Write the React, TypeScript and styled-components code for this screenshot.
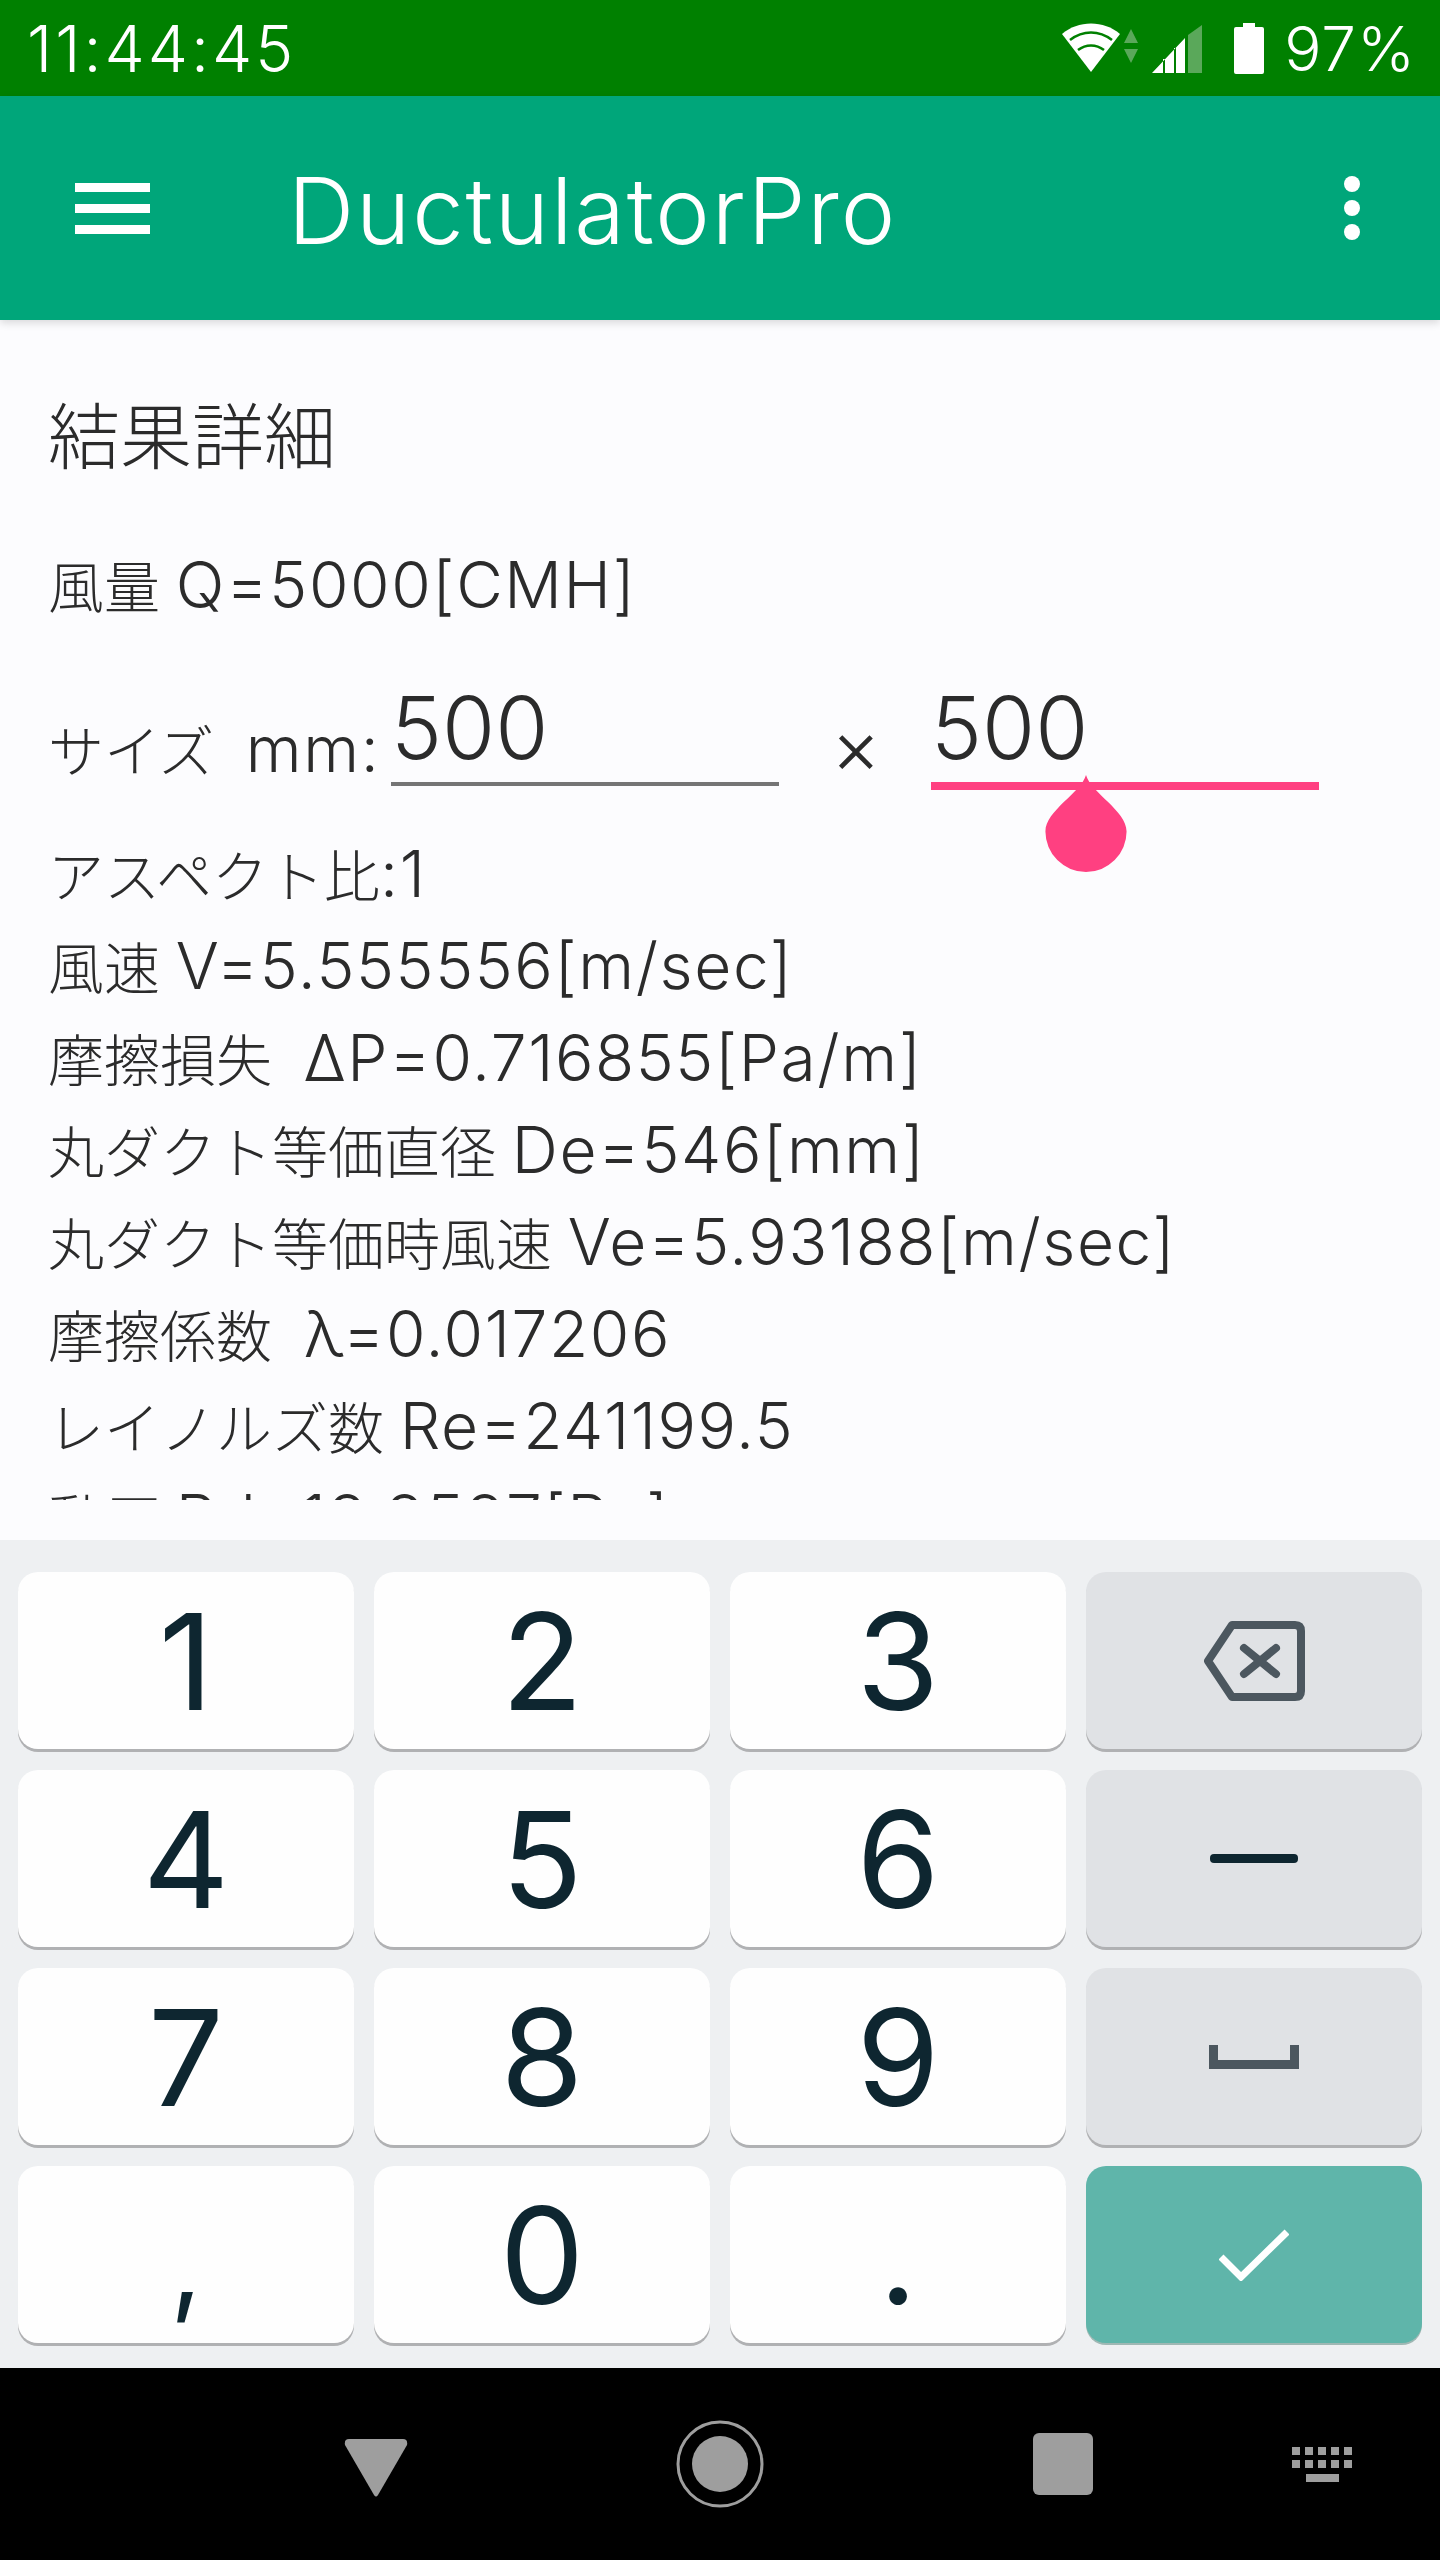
import React from 'react';
import styled, { createGlobalStyle } from 'styled-components';

const GlobalStyle = createGlobalStyle`
  html, body {
    margin: 0;
    padding: 0;
    background: #000;
  }
  * {
    box-sizing: border-box;
  }
`;

const Screen = styled.div`
  display: flex;
  flex-direction: column;
  width: 1440px;
  height: 2560px;
  overflow: hidden;
  font-family: Inter, 'Noto Sans CJK JP', sans-serif;
  background: #fcfcfe;
`;

const StatusBar = styled.div`
  flex: 0 0 96px;
  display: flex;
  align-items: center;
  justify-content: space-between;
  padding: 0 24px 0 27px;
  background: #008000;
  color: #fff;
  font-size: 62px;
  font-weight: 300;
`;

const Clock = styled.span`
  font-size: 64px;
  letter-spacing: 3px;
`;

const Percent = styled.span`
  letter-spacing: 1px;
`;

const StatusIcons = styled.div`
  display: flex;
  align-items: center;
`;

const Toolbar = styled.div`
  flex: 0 0 224px;
  display: flex;
  align-items: center;
  position: relative;
  z-index: 1;
  padding: 0 78px 0 75px;
  background: #00a67a;
  color: #fff;
  box-shadow: 0 3px 8px rgba(0, 0, 0, 0.14);
`;

const Title = styled.div`
  flex: 1;
  margin-left: 138px;
  padding-top: 6px;
  font-size: 92px;
  font-weight: 300;
  letter-spacing: 1.9px;
  line-height: 1;
`;

const Content = styled.div`
  flex: 0 0 1180px;
  padding: 67px 48px 0;
  overflow: hidden;
  color: #2b2b2b;
  font-size: 56px;
  font-weight: 300;
`;

const Gap = styled.div`
  flex: 0 0 40px;
`;

const Heading = styled.div`
  margin-bottom: 52px;
  font-size: 72px;
  line-height: 100px;
`;

const Line = styled.div`
  height: 92px;
  line-height: 92px;
  white-space: pre;
`;

const Value = styled.span`
  font-size: 64px;
  letter-spacing: 1.6px;
`;

const SizeRow = styled.div`
  display: flex;
  align-items: flex-start;
  height: 197px;
`;

const SizeLabel = styled.span`
  margin-top: 72px;
  width: 343px;
  line-height: 92px;
  white-space: pre;
`;

const Times = styled.span`
  margin: 69px 0 0 52px;
  width: 100px;
  font-size: 76px;
  line-height: 92px;
`;

const Field = styled.div<{ $focused?: boolean }>`
  position: relative;
  width: 388px;
  height: ${p => (p.$focused ? 159 : 155)}px;
  border-bottom: ${p => (p.$focused ? '8px solid #ff4081' : '4px solid #757575')};
  padding-top: 47px;
  font-size: 86px;
  line-height: 100px;
`;

const Handle = styled.svg`
  position: absolute;
  left: 114px;
  top: 144px;
`;

const Keyboard = styled.div`
  flex: 0 0 828px;
  display: grid;
  grid-template-columns: repeat(4, 336px);
  grid-template-rows: repeat(4, 177px);
  column-gap: 20px;
  row-gap: 21px;
  padding: 32px 0 0 18px;
  background: #eef0f2;
`;

const Key = styled.div<{ $kind?: 'digit' | 'function' | 'enter' | 'comma' }>`
  display: flex;
  align-items: center;
  justify-content: center;
  padding-top: ${p => (p.$kind === 'comma' ? 16 : 0)}px;
  border-radius: 20px;
  background: ${p =>
    p.$kind === 'enter' ? '#5fb5aa' : p.$kind === 'function' ? '#e0e2e5' : '#fefefe'};
  box-shadow: ${p => (p.$kind === 'enter' ? '0 2px 0 #9fb8b4' : '0 3px 0 #b0b1b3')};
  color: #0e2630;
  font-size: ${p => (p.$kind === 'comma' ? 110 : 134)}px;
  font-weight: 400;
  line-height: 1;
`;

const NavBar = styled.div`
  flex: 1;
  position: relative;
  background: #000;
`;

const NavIcon = styled.svg<{ $left: number; $top: number }>`
  position: absolute;
  left: ${p => p.$left}px;
  top: ${p => p.$top}px;
`;

const Wifi = () => (
  <svg width="60" height="50" viewBox="0 0 60 50" fill="none">
    <path d="M1 11C17-3 43-3 59 11L30 49Z" fill="#fff" />
    <path d="M9 17C22 7 38 7 51 17M17 27C25 21 35 21 43 27" stroke="#008000" strokeWidth="2.6" />
  </svg>
);

const Arrows = () => (
  <svg width="14" height="34" viewBox="0 0 14 34" style={{ margin: '0 14px 4px 3px' }}>
    <path d="M7 0L14 14H0ZM7 34L14 20H0Z" fill="#5aa85a" />
  </svg>
);

const Signal = () => (
  <svg width="50" height="48" viewBox="0 0 50 48" style={{ marginTop: 2 }}>
    <path d="M50 0V48H36V10Z" fill="#5aa85a" />
    <path d="M0 48L33 13V48ZM11 48H13V34H11ZM22 48H24V23H22Z" fill="#fff" fillRule="evenodd" />
  </svg>
);

const Battery = () => (
  <svg width="30" height="51" viewBox="0 0 30 51" style={{ margin: '0 20px 0 32px' }}>
    <path d="M9 0H21V4H28Q30 4 30 6V49Q30 51 28 51H2Q0 51 0 49V6Q0 4 2 4H9Z" fill="#fff" />
  </svg>
);

const Menu = () => (
  <svg width="75" height="51" viewBox="0 0 75 51" fill="#fff">
    <rect width="75" height="9" />
    <rect y="21" width="75" height="9" />
    <rect y="42" width="75" height="9" />
  </svg>
);

const Overflow = () => (
  <svg width="20" height="64" viewBox="0 0 20 64" fill="#fff">
    <circle cx="10" cy="8" r="8" />
    <circle cx="10" cy="32" r="8" />
    <circle cx="10" cy="56" r="8" />
  </svg>
);

const Backspace = () => (
  <svg width="102" height="80" viewBox="0 0 102 80" fill="none" stroke="#4c575f" strokeWidth="8">
    <path d="M29 4H92Q98 4 98 10V70Q98 76 92 76H29L5 40Z" strokeLinejoin="round" />
    <path d="M41 27L73 53M73 27L41 53" strokeLinecap="round" />
  </svg>
);

const Minus = () => <svg width="88" height="10"><rect width="88" height="9" rx="4" fill="#0e2630" /></svg>;

const Space = () => (
  <svg width="90" height="24" viewBox="0 0 90 24">
    <path d="M0 0H9V15H81V0H90V24H0Z" fill="#4c575f" />
  </svg>
);

const Check = () => (
  <svg width="70" height="52" viewBox="0 0 70 52" fill="none" stroke="#fff" strokeWidth="7">
    <path d="M2 28L22 48L68 3" />
  </svg>
);

const digits = ['1', '2', '3', '4', '5', '6', '7', '8', '9'];

const results = [
  ['アスペクト比', ':1'],
  ['風速 ', 'V=5.555556[m/sec]'],
  ['摩擦損失  ', 'ΔP=0.716855[Pa/m]'],
  ['丸ダクト等価直径 ', 'De=546[mm]'],
  ['丸ダクト等価時風速 ', 'Ve=5.93188[m/sec]'],
  ['摩擦係数  ', 'λ=0.017206'],
  ['レイノルズ数 ', 'Re=241199.5'],
  ['動圧 ', 'Pd=18.8587[Pa]'],
];

export default function App() {
  const fnKeys = [<Backspace key="b" />, <Minus key="m" />, <Space key="s" />];

  return (
    <>
      <GlobalStyle />
      <Screen>
        <StatusBar>
          <Clock>11:44:45</Clock>
          <StatusIcons>
            <Wifi />
            <Arrows />
            <Signal />
            <Battery />
            <Percent>97%</Percent>
          </StatusIcons>
        </StatusBar>

        <Toolbar>
          <Menu />
          <Title>DuctulatorPro</Title>
          <Overflow />
        </Toolbar>

        <Content>
          <Heading>結果詳細</Heading>
          <Line>風量 <Value>Q=5000[CMH]</Value></Line>
          <SizeRow>
            <SizeLabel>サイズ  <Value>mm:</Value></SizeLabel>
            <Field>500</Field>
            <Times>×</Times>
            <Field $focused>
              500
              <Handle width="82" height="97" viewBox="0 0 82 98">
                <path d="M41 0C46 18 82 36 82 57A41 41 0 0 1 0 57C0 36 36 18 41 0Z" fill="#ff4081" />
              </Handle>
            </Field>
          </SizeRow>
          {results.map(([label, value]) => (
            <Line key={value}>{label}<Value>{value}</Value></Line>
          ))}
        </Content>
        <Gap />

        <Keyboard>
          {digits.map((digit, i) => (
            <React.Fragment key={digit}>
              <Key>{digit}</Key>
              {i % 3 === 2 && <Key $kind="function">{fnKeys[(i - 2) / 3]}</Key>}
            </React.Fragment>
          ))}
          <Key $kind="comma">,</Key>
          <Key>0</Key>
          <Key>.</Key>
          <Key $kind="enter"><Check /></Key>
        </Keyboard>

        <NavBar>
          <NavIcon $left={344} $top={71} width="64" height="58" viewBox="0 0 64 58">
            <path d="M5 0H59Q64 0 63 6L34 56Q32 59 30 56L1 6Q0 0 5 0Z" fill="#9e9e9e" />
          </NavIcon>
          <NavIcon $left={676} $top={52} width="88" height="88" viewBox="0 0 88 88">
            <circle cx="44" cy="44" r="42" fill="none" stroke="#9e9e9e" strokeWidth="3" />
            <circle cx="44" cy="44" r="28" fill="#9e9e9e" />
          </NavIcon>
          <NavIcon $left={1033} $top={65} width="60" height="62" viewBox="0 0 60 62">
            <rect width="60" height="62" rx="6" fill="#9e9e9e" />
          </NavIcon>
          <NavIcon $left={1292} $top={79} width="61" height="36" viewBox="0 0 61 36" fill="#9e9e9e">
            {[0, 13, 26, 39, 52].map(x => (
              <React.Fragment key={x}>
                <rect x={x} width="8" height="8" />
                <rect x={x} y="13" width="8" height="8" />
              </React.Fragment>
            ))}
            <rect x="14" y="27" width="33" height="8" />
          </NavIcon>
        </NavBar>
      </Screen>
    </>
  );
}
